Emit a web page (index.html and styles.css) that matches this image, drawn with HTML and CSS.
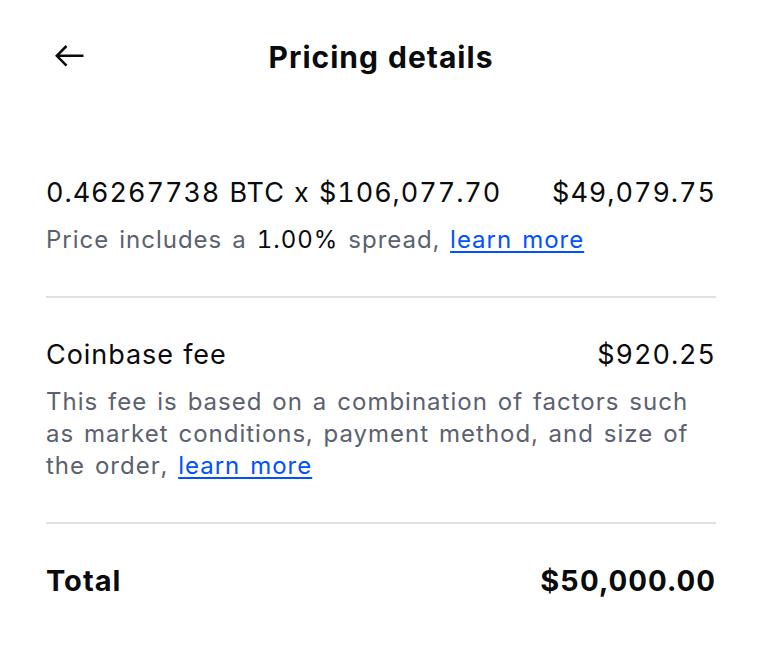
FILE: index.html
```html
<!DOCTYPE html>
<html>
<head>
<meta charset="utf-8">
<link rel="stylesheet" href="styles.css">
</head>
<body>
<div class="page">
  <header class="header">
    <button class="back" aria-label="Back">
      <svg width="30" height="24" viewBox="0 0 30 24"><path d="M11.5 2 L1.8 11.8 L11.5 21.6 M1.8 11.8 H28.5" fill="none" stroke="#0a0b0d" stroke-width="2.5" stroke-linejoin="miter"/></svg>
    </button>
    <h1 class="title">Pricing details</h1>
    <span class="spacer"></span>
  </header>
  <section class="item">
    <div class="row">
      <span>0.46267738 BTC x $106,077.70</span>
      <span>$49,079.75</span>
    </div>
    <p class="note">Price includes a <span class="dark">1.00%</span> spread, <a href="#">learn more</a></p>
  </section>
  <div class="divider"></div>
  <section class="item">
    <div class="row">
      <span>Coinbase fee</span>
      <span>$920.25</span>
    </div>
    <p class="note">This fee is based on a combination of factors such as market conditions, payment method, and size of the order, <a href="#">learn more</a></p>
  </section>
  <div class="divider"></div>
  <section class="item total">
    <div class="row">
      <span>Total</span>
      <span>$50,000.00</span>
    </div>
  </section>
</div>
</body>
</html>
```
FILE: styles.css
```css
html, body {
  margin: 0;
  padding: 0;
  background: #ffffff;
}
body {
  font-family: Inter, "Noto Sans", sans-serif;
  color: #0a0b0d;
  font-variant-numeric: tabular-nums;
}
.page {
  padding: 0 46px;
}
.header {
  display: grid;
  grid-template-columns: 1fr auto 1fr;
  align-items: center;
  padding: 39px 0 61px;
}
.back {
  justify-self: start;
  border: 0;
  background: none;
  padding: 0;
  margin: 0 0 0 9px;
  display: flex;
  position: relative;
  top: -1px;
}
.title {
  margin: 0;
  font-size: 30px;
  line-height: 36px;
  font-weight: 700;
  letter-spacing: 1px;
}
.item {
  padding: 39px 0 40px;
}
.row {
  display: flex;
  justify-content: space-between;
  font-size: 27px;
  line-height: 36px;
  letter-spacing: 0.95px;
  word-spacing: 1px;
}
.note {
  margin: 13px 0 0;
  font-size: 24px;
  line-height: 32px;
  color: #5b616e;
  letter-spacing: 1px;
  word-spacing: 2.5px;
}
.note .dark {
  color: #0a0b0d;
}
.note a {
  color: #0052ff;
  text-decoration: underline;
  text-decoration-thickness: 1.5px;
  text-underline-offset: 3px;
}
.divider {
  height: 2px;
  background: #dee1e6;
}
.total .row {
  font-size: 29px;
  font-weight: 700;
  letter-spacing: 1px;
  word-spacing: 0;
}
```
